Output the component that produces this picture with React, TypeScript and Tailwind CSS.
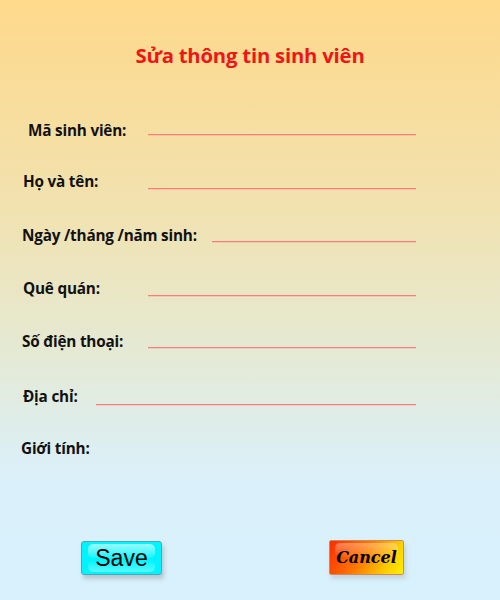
import React from "react";

const font = { fontFamily: "'Open Sans', Lato, sans-serif" };

function Row({
  label,
  labelPl,
  lineWidth,
  lineTop,
  mt,
}: {
  label: string;
  labelPl: number;
  lineWidth?: number;
  lineTop?: number;
  mt: number;
}) {
  return (
    <div className="flex items-start h-6 pr-[84px]" style={{ marginTop: mt, paddingLeft: labelPl }}>
      <div className="h-6 leading-6 text-[15.3px] font-bold tracking-[-0.2px] text-[#111]">{label}</div>
      {lineWidth !== undefined && (
        <div
          className="ml-auto h-px bg-[#ff7a7a] shadow-[0_0.5px_0_rgba(255,120,120,0.5)]"
          style={{ width: lineWidth, marginTop: lineTop }}
        />
      )}
    </div>
  );
}

export default function App() {
  return (
    <div
      className="w-[500px] h-[600px] overflow-hidden flex flex-col bg-[linear-gradient(180deg,#fed98b_0%,#f1e2b0_35%,#e4ead6_60%,#daf0fa_80%,#d8f1fd_100%)]"
      style={font}
    >
      <div className="pt-[41px] text-center text-[20.3px] leading-7 font-bold text-[#f01414] tracking-[-0.2px]">
        Sửa thông tin sinh viên
      </div>
      <Row label="Mã sinh viên:" labelPl={28} lineWidth={268} lineTop={16} mt={49} />
      <Row label="Họ và tên:" labelPl={23} lineWidth={268} lineTop={19} mt={27} />
      <Row label="Ngày /tháng /năm sinh:" labelPl={22} lineWidth={204} lineTop={18} mt={30} />
      <Row label="Quê quán:" labelPl={23} lineWidth={268} lineTop={19} mt={29} />
      <Row label="Số điện thoại:" labelPl={22} lineWidth={268} lineTop={18} mt={29} />
      <Row label="Địa chỉ:" labelPl={23} lineWidth={320} lineTop={20} mt={31} />
      <Row label="Giới tính:" labelPl={21} mt={28} />
      <div className="flex items-start mt-[81px] pl-[81px] gap-[167px]">
        <button className="relative w-[81px] h-[34px] rounded-[3px] border border-[#4aa9b8] bg-[#00f4fe] shadow-[2px_4px_4px_rgba(120,120,120,0.35)] flex items-center justify-center">
          <div className="absolute left-[6px] right-[6px] top-[2px] h-[14px] rounded-[5px] bg-[linear-gradient(180deg,rgba(255,255,255,0.6),rgba(255,255,255,0.1))]" />
          <div className="absolute left-[6px] right-[6px] bottom-[2px] h-[12px] rounded-[5px] bg-[linear-gradient(0deg,rgba(255,255,255,0.35),rgba(255,255,255,0))]" />
          <span
            className="relative text-[23px] leading-none text-black"
            style={{ fontFamily: "'Liberation Sans', Arial, sans-serif" }}
          >
            Save
          </span>
        </button>
        <button className="relative -mt-px w-[75px] h-[35px] rounded-[2px] border border-[#d08a5a] bg-[linear-gradient(120deg,#ff2a00_0%,#ff7a00_45%,#ffd000_80%,#fff000_100%)] shadow-[2px_4px_4px_rgba(150,150,150,0.3)] flex items-center justify-center">
          <div className="absolute left-[5px] right-[5px] top-[2px] h-[14px] rounded-[5px] bg-[linear-gradient(180deg,rgba(255,255,255,0.35),rgba(255,255,255,0.05))]" />
          <span
            className="relative text-[16px] leading-none font-bold italic text-black"
            style={{ fontFamily: "'DejaVu Serif', 'Liberation Serif', serif" }}
          >
            Cancel
          </span>
        </button>
      </div>
    </div>
  );
}
